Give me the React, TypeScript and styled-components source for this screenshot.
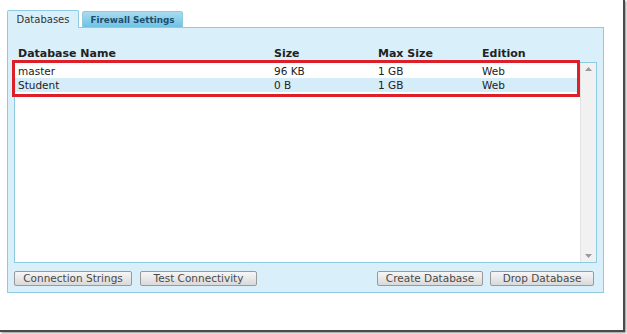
import React from "react";
import styled, { createGlobalStyle } from "styled-components";

const Global = createGlobalStyle`
  html, body { margin: 0; padding: 0; background: #ffffff; }
  body { width: 627px; height: 334px; overflow: hidden; font-family: "DejaVu Sans", Verdana, sans-serif; }
`;

const Frame = styled.div`
  box-sizing: border-box;
  width: 625px;
  height: 332px;
  background: #ffffff;
  border-right: 2px solid #4a4a4a;
  border-bottom: 2px solid #4a4a4a;
  box-shadow: 1px 1px 2px rgba(0,0,0,0.45);
  padding: 10px 0 0 7px;
`;

const Tabs = styled.div`
  display: flex;
  align-items: flex-end;
  gap: 3px;
  height: 18px;
  margin-bottom: -1px;
  position: relative;
  z-index: 1;
`;

const Tab = styled.div<{ $active?: boolean }>`
  box-sizing: border-box;
  height: ${(p) => (p.$active ? "18px" : "17px")};
  width: ${(p) => (p.$active ? "72px" : "101px")};
  display: flex;
  align-items: center;
  justify-content: center;
  font-size: ${(p) => (p.$active ? "10px" : "8.8px")};
  color: ${(p) => (p.$active ? "#333" : "#1d4e6e")};
  font-weight: ${(p) => (p.$active ? "normal" : "bold")};
  border: 1px solid #8ecbe0;
  border-bottom: ${(p) => (p.$active ? "none" : "1px solid #8ecbe0")};
  border-radius: 2px 2px 0 0;
  background: ${(p) =>
    p.$active ? "#d9f0fb" : "linear-gradient(#a8dcf0, #6ec2e4)"};
`;

const Panel = styled.div`
  box-sizing: border-box;
  width: 597px;
  height: 266px;
  background: #d9f0fb;
  border: 1px solid #8ecbe0;
  padding: 17px 6px 0 6px;
  display: flex;
  flex-direction: column;
`;

const Columns = styled.div`
  display: grid;
  grid-template-columns: 256px 104px 104px 1fr;
  padding-left: 4px;
  font-size: 11px;
  font-weight: bold;
  color: #222;
  height: 17px;
  align-items: center;
`;

const ListBox = styled.div`
  position: relative;
  box-sizing: border-box;
  height: 201px;
  background: #ffffff;
  border: 1px solid #8ecbe0;
  display: flex;
`;

const Rows = styled.div`
  flex: 1;
  padding-top: 1px;
`;

const Row = styled.div<{ $alt?: boolean }>`
  display: grid;
  grid-template-columns: 256px 104px 104px 1fr;
  padding-left: 3px;
  height: 14px;
  align-items: center;
  font-size: 10.5px;
  color: #222;
  background: ${(p) => (p.$alt ? "#d5ecf9" : "#ffffff")};
`;

const Scroll = styled.div`
  width: 15px;
  background: #f1f1f1;
  border-left: 1px solid #e2e2e2;
  display: flex;
  flex-direction: column;
  justify-content: space-between;
  align-items: center;
  padding: 4px 0;
`;

const Highlight = styled.div`
  position: absolute;
  left: -3px;
  top: -3px;
  width: 568px;
  height: 37px;
  border: 3.5px solid #dd1f2a;
  box-sizing: border-box;
  pointer-events: none;
`;

const Buttons = styled.div`
  display: flex;
  align-items: center;
  margin-top: 8px;
  padding-right: 3px;
  gap: 8px;
`;

const RightGroup = styled.div`
  margin-left: auto;
  display: flex;
  gap: 7px;
`;

const Button = styled.button<{ $w: number }>`
  box-sizing: border-box;
  width: ${(p) => p.$w}px;
  height: 15px;
  padding: 0;
  font-family: "DejaVu Sans", Verdana, sans-serif;
  font-size: 10.5px;
  color: #4a4a4a;
  border: 1px solid #9a9a9a;
  border-radius: 2px;
  background: linear-gradient(#f6f6f6, #d9d9d9);
  line-height: 13px;
`;

const Arrow = ({ up }: { up?: boolean }) => (
  <svg width="7" height="4" viewBox="0 0 7 4">
    <path d={up ? "M0 4 L3.5 0 L7 4 Z" : "M0 0 L3.5 4 L7 0 Z"} fill="#9a9a9a" />
  </svg>
);

const data = [
  { name: "master", size: "96 KB", max: "1 GB", ed: "Web" },
  { name: "Student", size: "0 B", max: "1 GB", ed: "Web" },
];

export default function App() {
  return (
    <>
      <Global />
      <Frame>
        <Tabs>
          <Tab $active>Databases</Tab>
          <Tab>Firewall Settings</Tab>
        </Tabs>
        <Panel>
          <Columns>
            <span>Database Name</span>
            <span>Size</span>
            <span>Max Size</span>
            <span>Edition</span>
          </Columns>
          <ListBox>
            <Rows>
              {data.map((d, i) => (
                <Row key={d.name} $alt={i % 2 === 1}>
                  <span>{d.name}</span>
                  <span>{d.size}</span>
                  <span>{d.max}</span>
                  <span>{d.ed}</span>
                </Row>
              ))}
            </Rows>
            <Scroll>
              <Arrow up />
              <Arrow />
            </Scroll>
            <Highlight />
          </ListBox>
          <Buttons>
            <Button $w={118}>Connection Strings</Button>
            <Button $w={117}>Test Connectivity</Button>
            <RightGroup>
              <Button $w={106}>Create Database</Button>
              <Button $w={104}>Drop Database</Button>
            </RightGroup>
          </Buttons>
        </Panel>
      </Frame>
    </>
  );
}
